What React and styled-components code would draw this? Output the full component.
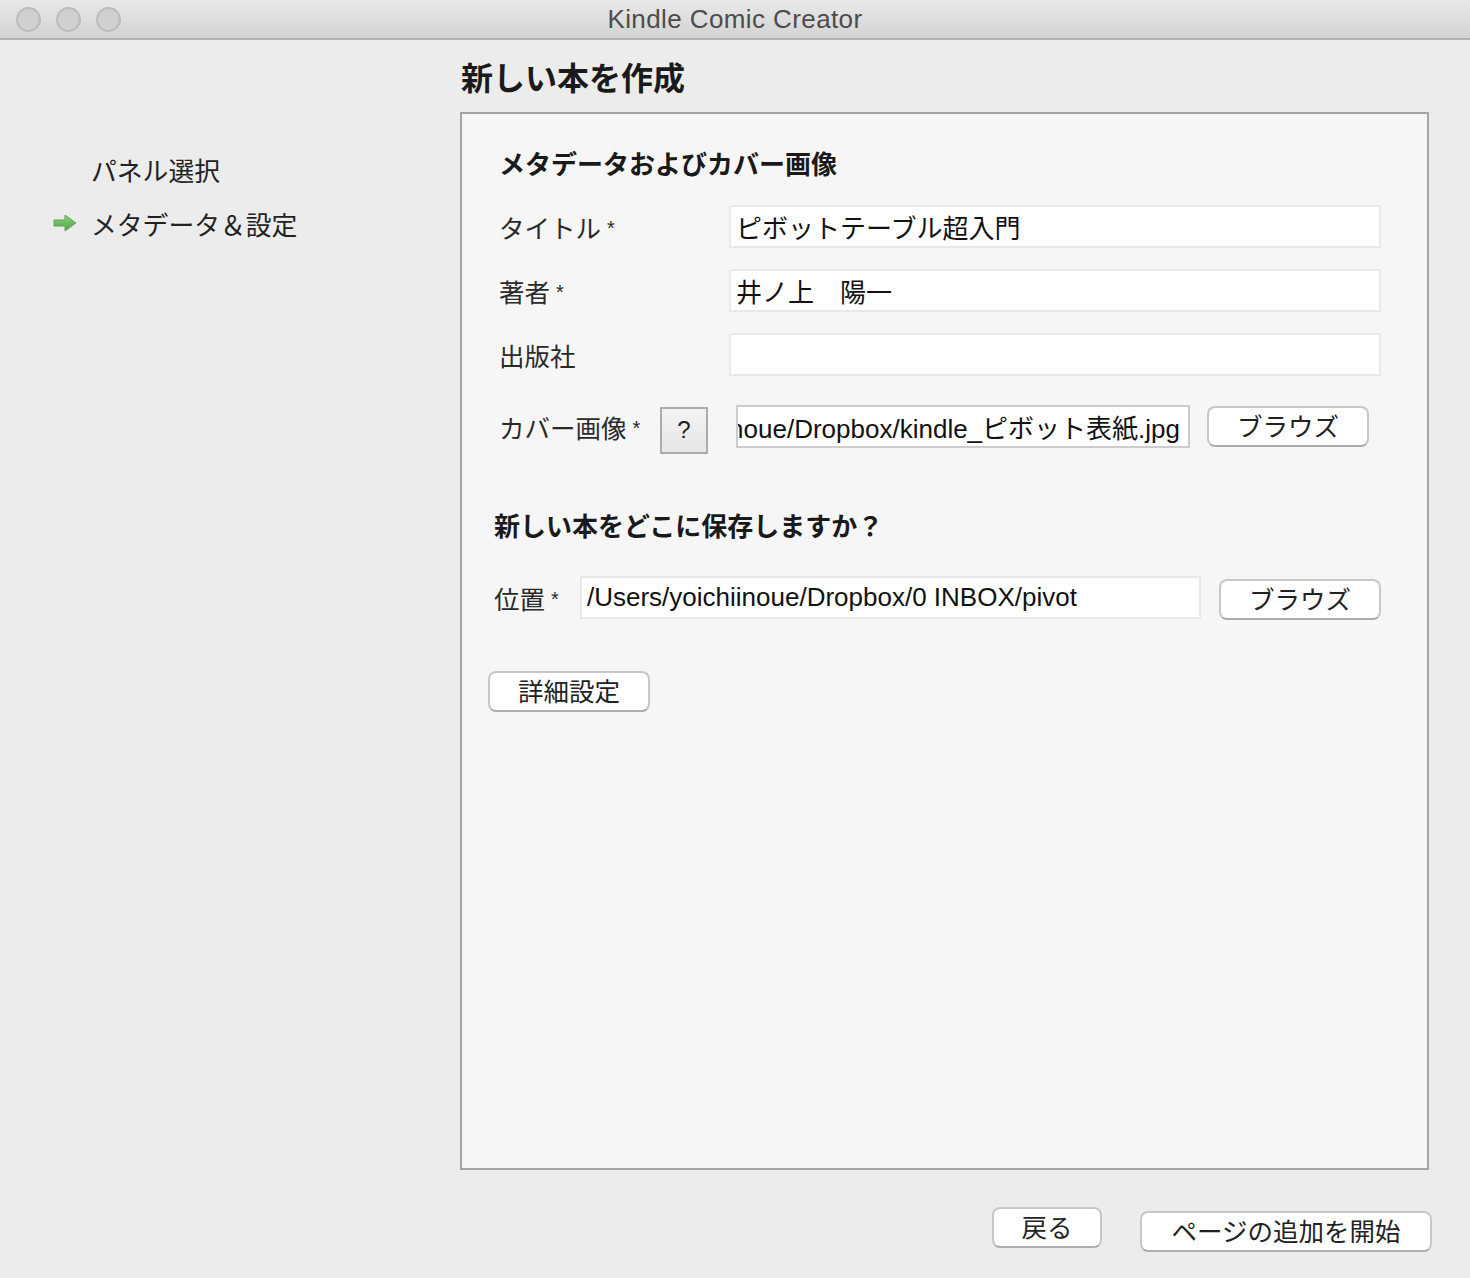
import React from "react";
import styled, { createGlobalStyle } from "styled-components";

const Global = createGlobalStyle`
  html, body { margin: 0; padding: 0; }
  body {
    background: #ececec;
    font-family: "Liberation Sans", "Noto Sans CJK JP", sans-serif;
    color: #222;
  }
`;

const Window = styled.div`
  width: 1470px;
  height: 1278px;
  display: flex;
  flex-direction: column;
  background: #ececec;
  overflow: hidden;
`;

const TitleBar = styled.div`
  height: 38px;
  flex: none;
  display: flex;
  align-items: center;
  position: relative;
  background: linear-gradient(#e9e9e9, #d3d3d3);
  border-bottom: 2px solid #b1b1b1;
`;

const Lights = styled.div`
  display: flex;
  gap: 15px;
  padding-left: 16px;
`;

const Light = styled.span`
  width: 21px;
  height: 21px;
  border-radius: 50%;
  background: #d0d0d0;
  border: 2px solid #bcbcbc;
`;

const WindowTitle = styled.div`
  position: absolute;
  left: 0;
  right: 0;
  text-align: center;
  font-size: 26px;
  color: #4c4c4c;
  letter-spacing: 0.4px;
`;

const Body = styled.div`
  flex: 1;
  display: flex;
`;

const Sidebar = styled.div`
  width: 460px;
  flex: none;
  padding-top: 112px;
  display: flex;
  flex-direction: column;
  gap: 20px;
`;

const Step = styled.div`
  display: flex;
  align-items: center;
  height: 34px;
  padding-left: 53px;
  font-size: 25.8px;
  color: #222;
`;

const ArrowSlot = styled.span`
  width: 38px;
  display: flex;
  align-items: center;
`;

const Main = styled.div`
  flex: 1;
  display: flex;
  flex-direction: column;
  padding-right: 42px;
`;

const PageTitle = styled.h1`
  margin: 0;
  height: 72px;
  display: flex;
  align-items: center;
  padding-left: 1px;
  padding-bottom: 1px;
  box-sizing: border-box;
  font-size: 32px;
  font-weight: bold;
  color: #1a1a1a;
`;

const Panel = styled.div`
  height: 1058px;
  box-sizing: border-box;
  background: #f6f6f6;
  border: 2px solid #a4a4a4;
  padding: 28px 46px 0 26px;
  display: flex;
  flex-direction: column;
`;

const SectionTitle = styled.h2`
  margin: 0;
  margin-top: ${(p) => p.$mt || 0}px;
  font-size: 26px;
  font-weight: bold;
  color: #1a1a1a;
  height: 40px;
  display: flex;
  align-items: center;
  padding-left: ${(p) => p.$indent || 0}px;
`;

const FormRow = styled.div`
  display: flex;
  align-items: center;
  height: 44px;
  margin-top: ${(p) => p.$mt || 0}px;
  padding-left: ${(p) => p.$indent || 0}px;
`;

const Label = styled.div`
  width: ${(p) => p.$w}px;
  flex: none;
  font-size: 25.5px;
  color: #2a2a2a;
  white-space: nowrap;
`;

const Star = styled.span`
  font-size: 20px;
  margin-left: 6px;
  vertical-align: 3px;
`;

const Field = styled.div`
  flex: ${(p) => (p.$w ? "none" : "1")};
  width: ${(p) => (p.$w ? `${p.$w}px` : "auto")};
  height: 43px;
  box-sizing: border-box;
  background: #fff;
  border: 2px solid ${(p) => (p.$dark ? "#cccccc" : "#e9e9e9")};
  display: flex;
  align-items: center;
  justify-content: ${(p) => (p.$end ? "flex-end" : "flex-start")};
  overflow: hidden;
  padding: 0 ${(p) => (p.$end ? 8 : 5)}px 0 5px;
  font-size: 26px;
  color: #111;
  white-space: nowrap;
`;

const FieldText = styled.span`
  flex: none;
  white-space: nowrap;
`;

const HelpBtn = styled.div`
  width: 48px;
  height: 47px;
  box-sizing: border-box;
  flex: none;
  margin-left: 17px;
  margin-right: 28px;
  margin-top: 8px;
  border: 2px solid #ababab;
  background: linear-gradient(#f3f3f3, #e6e6e6);
  display: flex;
  align-items: center;
  justify-content: center;
  font-size: 24px;
  color: #222;
`;

const Button = styled.button`
  width: ${(p) => p.$w}px;
  height: 41px;
  flex: none;
  box-sizing: border-box;
  margin-left: ${(p) => p.$ml || 0}px;
  margin-top: ${(p) => p.$mt || 0}px;
  border-radius: 8px;
  border: 2px solid #c8c8c8;
  border-bottom-color: #aeaeae;
  background: #fff;
  font-family: "Liberation Sans", "Noto Sans CJK JP", sans-serif;
  font-size: 25.5px;
  color: #222;
  padding: 0 0 4px;
  display: flex;
  align-items: center;
  justify-content: center;
`;

const Footer = styled.div`
  flex: 1;
  display: flex;
  align-items: flex-start;
  justify-content: flex-end;
  padding-top: 37px;
  margin-right: -3px;
`;

const GreenArrow = () => (
  <svg width="24" height="18" viewBox="0 0 24 18">
    <defs>
      <linearGradient id="ga" x1="0" y1="0" x2="0" y2="1">
        <stop offset="0" stopColor="#8fd27f" />
        <stop offset="1" stopColor="#4ea543" />
      </linearGradient>
    </defs>
    <path d="M1 6 H12 V1 L23 9 L12 17 V12 H1 Z" fill="url(#ga)" stroke="#5aa84e" strokeWidth="1" />
  </svg>
);

export default function App() {
  return (
    <Window>
      <Global />
      <TitleBar>
        <Lights>
          <Light />
          <Light />
          <Light />
        </Lights>
        <WindowTitle>Kindle Comic Creator</WindowTitle>
      </TitleBar>
      <Body>
        <Sidebar>
          <Step>
            <ArrowSlot />
            パネル選択
          </Step>
          <Step>
            <ArrowSlot>
              <GreenArrow />
            </ArrowSlot>
            メタデータ＆設定
          </Step>
        </Sidebar>
        <Main>
          <PageTitle>新しい本を作成</PageTitle>
          <Panel>
            <SectionTitle $indent={11}>メタデータおよびカバー画像</SectionTitle>
            <FormRow $mt={22} $indent={11}>
              <Label $w={230}>
                タイトル<Star>*</Star>
              </Label>
              <Field>ピボットテーブル超入門</Field>
            </FormRow>
            <FormRow $mt={20} $indent={11}>
              <Label $w={230}>
                著者<Star>*</Star>
              </Label>
              <Field>井ノ上　陽一</Field>
            </FormRow>
            <FormRow $mt={20} $indent={11}>
              <Label $w={230}>出版社</Label>
              <Field />
            </FormRow>
            <FormRow $mt={28} $indent={11}>
              <Label $w={144}>
                カバー画像<Star>*</Star>
              </Label>
              <HelpBtn>?</HelpBtn>
              <Field $w={454} $dark $end>
                <FieldText>/Users/yoichiinoue/Dropbox/kindle_ピボット表紙.jpg</FieldText>
              </Field>
              <Button $w={162} $ml={17}>
                ブラウズ
              </Button>
            </FormRow>
            <SectionTitle $indent={6} $mt={56}>
              新しい本をどこに保存しますか？
            </SectionTitle>
            <FormRow $mt={31} $indent={6}>
              <Label $w={86}>
                位置<Star>*</Star>
              </Label>
              <Field $w={621}>/Users/yoichiinoue/Dropbox/0 INBOX/pivot</Field>
              <Button $w={162} $ml={18} $mt={4}>
                ブラウズ
              </Button>
            </FormRow>
            <FormRow $mt={50}>
              <Button $w={162}>詳細設定</Button>
            </FormRow>
          </Panel>
          <Footer>
            <Button $w={110}>戻る</Button>
            <Button $w={292} $ml={38} $mt={4}>
              ページの追加を開始
            </Button>
          </Footer>
        </Main>
      </Body>
    </Window>
  );
}
